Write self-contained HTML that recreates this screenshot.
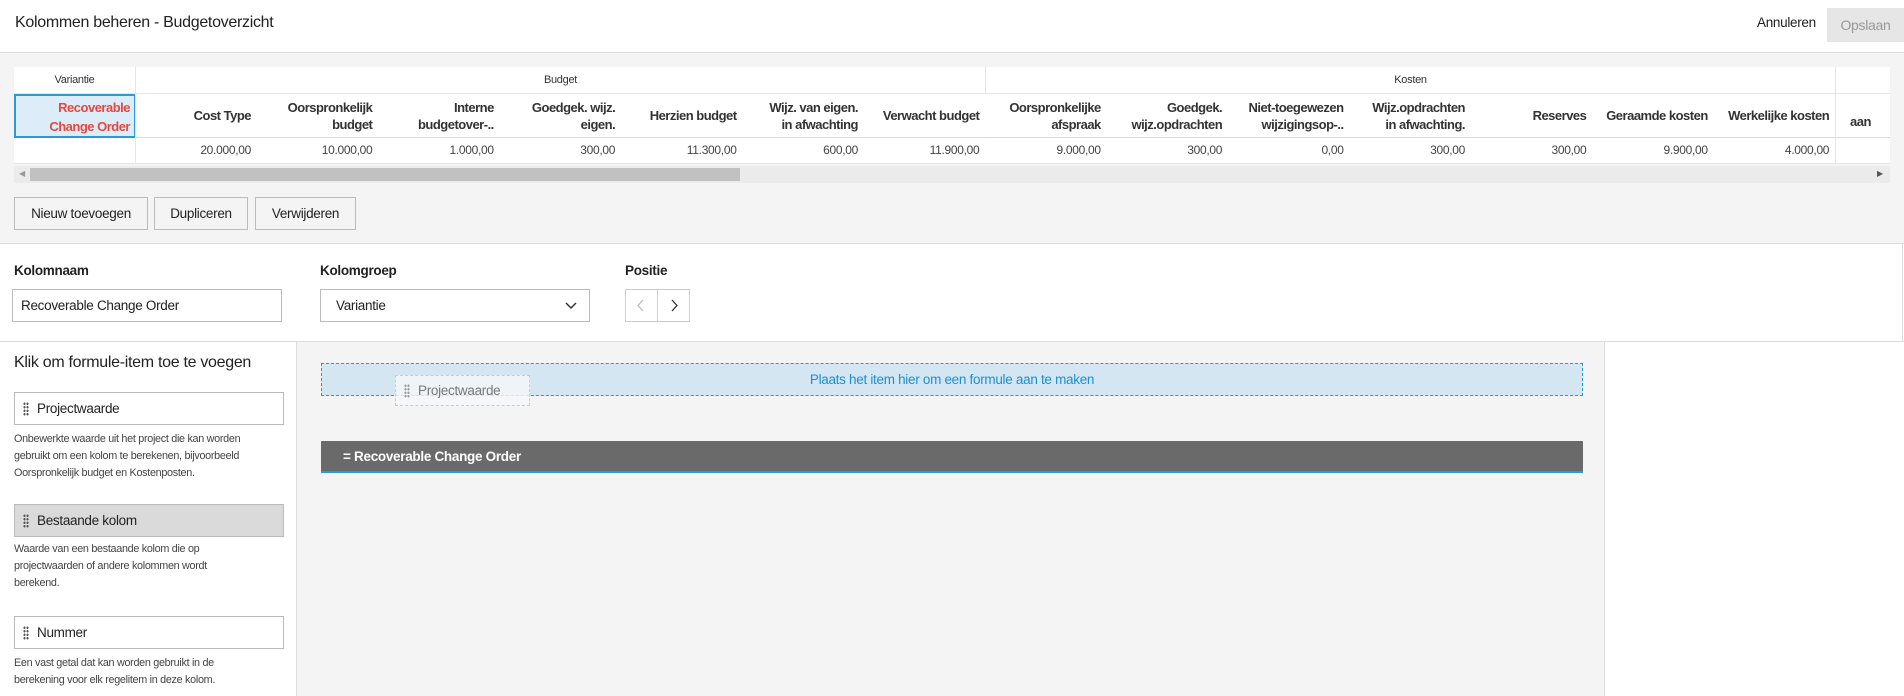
<!DOCTYPE html>
<html><head><meta charset="utf-8"><style>
*{box-sizing:border-box;margin:0;padding:0}
body{width:1904px;height:696px;overflow:hidden;background:#fff;font-family:"Liberation Sans",sans-serif;color:#222;position:relative;letter-spacing:-0.3px}
.a{position:absolute}
.hdr{left:0;top:0;width:1904px;height:53px;border-bottom:1px solid #ddd;background:#fff}
.gray{left:0;top:53px;width:1904px;height:191px;background:#f4f4f4;border-bottom:1px solid #ddd}
.th{font-size:13px;font-weight:bold;text-align:right;color:#333;line-height:17px;white-space:nowrap;letter-spacing:-0.5px}
.btn{background:#f4f4f4;border:1px solid #bbb;font-size:13.5px;height:33px;line-height:31px;text-align:center;color:#222}
.lbl{font-size:13.5px;font-weight:bold}
.inp{border:1px solid #bbb;height:33px;background:#fff;font-size:13.5px;line-height:31px;padding-left:8px}
.item{border:1px solid #bbb;background:#fff;height:33px;left:14px;width:270px;font-size:13.5px;line-height:31px;padding-left:22px}
.dots{position:absolute;left:8px;top:9px;width:6px;height:14px;background-image:radial-gradient(circle,#555 1px,transparent 1.3px);background-size:3px 3.5px}
.desc{left:14px;width:255px;font-size:10.8px;line-height:17px;color:#444}
</style></head><body>
<div class="a hdr">
<div class="a" style="left:15px;top:14px;font-size:16px">Kolommen beheren - Budgetoverzicht</div>
<div class="a" style="left:1757px;top:15px;font-size:13.5px">Annuleren</div>
<div class="a" style="left:1827px;top:8px;width:77px;height:34px;background:#e6e6e6;color:#999;font-size:14px;line-height:34px;text-align:center">Opslaan</div>
</div>
<div class="a gray"></div>
<div class="a" style="left:14px;top:67px;width:1876px;height:97px;background:#fff;overflow:hidden">
<div class="a" style="left:0;top:0;width:122px;height:27px;border-right:1px solid #e6e6e6;border-bottom:1px solid #e6e6e6;font-size:11px;text-align:center;line-height:27px;color:#333">Variantie</div>
<div class="a" style="left:122px;top:0;width:850px;height:27px;border-right:1px solid #e6e6e6;border-bottom:1px solid #e6e6e6;font-size:11px;text-align:center;line-height:27px;color:#333">Budget</div>
<div class="a" style="left:972px;top:0;width:850px;height:27px;border-right:1px solid #e6e6e6;border-bottom:1px solid #e6e6e6;font-size:11px;text-align:center;line-height:27px;color:#333">Kosten</div>
<div class="a" style="left:1822px;top:0;width:60px;height:27px;border-bottom:1px solid #e6e6e6"></div>
<div class="a" style="left:122px;top:70px;width:850px;height:1px;background:#cfe5b8"></div>
<div class="a" style="left:972px;top:70px;width:850px;height:1px;background:#f3d98a"></div>
<div class="a" style="left:1822px;top:70px;width:60px;height:1px;background:#cfdcea"></div>
<div class="a" style="left:1821px;top:0;width:1px;height:97px;background:#e6e6e6"></div>
<div class="a th" style="left:1836px;top:46px;font-size:13px">aan</div>
<div class="a" style="left:0;top:27px;width:122px;height:44px;background:#dcedf9;border:2px solid #2a9ad6;color:#e8473e;font-size:13px;font-weight:bold;text-align:right;padding:2px 4px;line-height:19px;letter-spacing:-0.5px">Recoverable<br>Change Order</div>
<div class="a" style="left:121px;top:0;width:1px;height:97px;background:#e6e6e6"></div>
<div class="a" style="left:0;top:96px;width:1876px;height:1px;background:#e6e6e6"></div>
<div id="cols"></div>
</div>
<div class="a" style="left:14px;top:166px;width:1876px;height:17px;background:#ebebeb"></div>
<div class="a" style="left:30px;top:168px;width:710px;height:13px;background:#c1c1c1"></div>
<div class="a" style="left:19px;top:169px;font-size:8px;color:#999">◀</div>
<div class="a" style="left:1877px;top:169px;font-size:8px;color:#555">▶</div>
<div class="a btn" style="left:14px;top:197px;width:134px">Nieuw toevoegen</div>
<div class="a btn" style="left:154px;top:197px;width:94px">Dupliceren</div>
<div class="a btn" style="left:255px;top:197px;width:101px">Verwijderen</div>
<div class="a" style="left:1902px;top:244px;width:1px;height:97px;background:#ddd"></div>
<div class="a lbl" style="left:14px;top:263px">Kolomnaam</div>
<div class="a lbl" style="left:320px;top:263px">Kolomgroep</div>
<div class="a lbl" style="left:625px;top:263px">Positie</div>
<div class="a inp" style="left:12px;top:289px;width:270px">Recoverable Change Order</div>
<div class="a inp" style="left:320px;top:289px;width:270px;padding-left:15px">Variantie
<svg class="a" style="right:12px;top:12px" width="12" height="8"><path d="M1 1l5 5 5-5" stroke="#333" stroke-width="1.5" fill="none"/></svg></div>
<div class="a" style="left:625px;top:289px;width:65px;height:33px;border:1px solid #ccc;background:#fff"></div>
<div class="a" style="left:657px;top:289px;width:1px;height:33px;background:#ccc"></div>
<svg class="a" style="left:637px;top:299px" width="8" height="13"><path d="M6 1l-5 5.5 5 5.5" stroke="#bbb" stroke-width="1.3" fill="none"/></svg>
<svg class="a" style="left:670px;top:299px" width="8" height="13"><path d="M2 1l5 5.5-5 5.5" stroke="#333" stroke-width="1.3" fill="none"/></svg>
<div class="a" style="left:0;top:341px;width:1904px;height:1px;background:#ddd"></div>
<div class="a" style="left:296px;top:342px;width:1309px;height:354px;background:#f4f4f4;border-left:1px solid #ddd;border-right:1px solid #ddd"></div>
<div class="a" style="left:14px;top:354px;font-size:16px">Klik om formule-item toe te voegen</div>
<div class="a item" style="top:392px"><span class="dots"></span>Projectwaarde</div>
<div class="a desc" style="top:431px">Onbewerkte waarde uit het project die kan worden gebruikt om een kolom te berekenen, bijvoorbeeld Oorspronkelijk budget en Kostenposten.</div>
<div class="a item" style="top:504px;background:#dadada"><span class="dots"></span>Bestaande kolom</div>
<div class="a desc" style="top:541px;width:225px">Waarde van een bestaande kolom die op projectwaarden of andere kolommen wordt berekend.</div>
<div class="a item" style="top:616px"><span class="dots"></span>Nummer</div>
<div class="a desc" style="top:655px;width:232px">Een vast getal dat kan worden gebruikt in de berekening voor elk regelitem in deze kolom.</div>
<div class="a" style="left:321px;top:363px;width:1262px;height:33px;background:#d4e6f2;border:1px dashed #2a9ad6;color:#1d8fd0;font-size:13.5px;text-align:center;line-height:31px">Plaats het item hier om een formule aan te maken</div>
<div class="a" style="left:395px;top:375px;width:135px;height:31px;background:rgba(245,248,250,.8);border:1px dashed #ccc;color:#777;font-size:13.5px;line-height:29px;padding-left:22px"><span class="dots" style="top:8px;background-image:radial-gradient(circle,#999 1px,transparent 1.3px)"></span>Projectwaarde</div>
<div class="a" style="left:321px;top:441px;width:1262px;height:32px;background:#6a6a6a;border-bottom:2px solid #2a9ad6;color:#fff;font-size:13.5px;font-weight:bold;line-height:31px;padding-left:22px">= Recoverable Change Order</div>
<script>
var h=["Cost Type","Oorspronkelijk<br>budget","Interne<br>budgetover-..","Goedgek. wijz.<br>eigen.","Herzien budget","Wijz. van eigen.<br>in afwachting","Verwacht budget","Oorspronkelijke<br>afspraak","Goedgek.<br>wijz.opdrachten","Niet-toegewezen<br>wijzigingsop-..","Wijz.opdrachten<br>in afwachting.","Reserves","Geraamde kosten","Werkelijke kosten"];
var v=["20.000,00","10.000,00","1.000,00","300,00","11.300,00","600,00","11.900,00","9.000,00","300,00","0,00","300,00","300,00","9.900,00","4.000,00"];
var s="";
for(var i=0;i<14;i++){var x=122+i*121.4;
s+='<div class="a th" style="left:'+x+'px;top:27px;width:121px;height:43px;display:flex;align-items:center;justify-content:flex-end;padding-right:6px">'+h[i]+'</div>';
s+='<div class="a" style="left:'+x+'px;top:71px;width:121px;height:25px;line-height:25px;text-align:right;padding-right:6px;font-size:12px;color:#444">'+v[i]+'</div>';}
document.getElementById('cols').innerHTML=s;
</script>
</body></html>
